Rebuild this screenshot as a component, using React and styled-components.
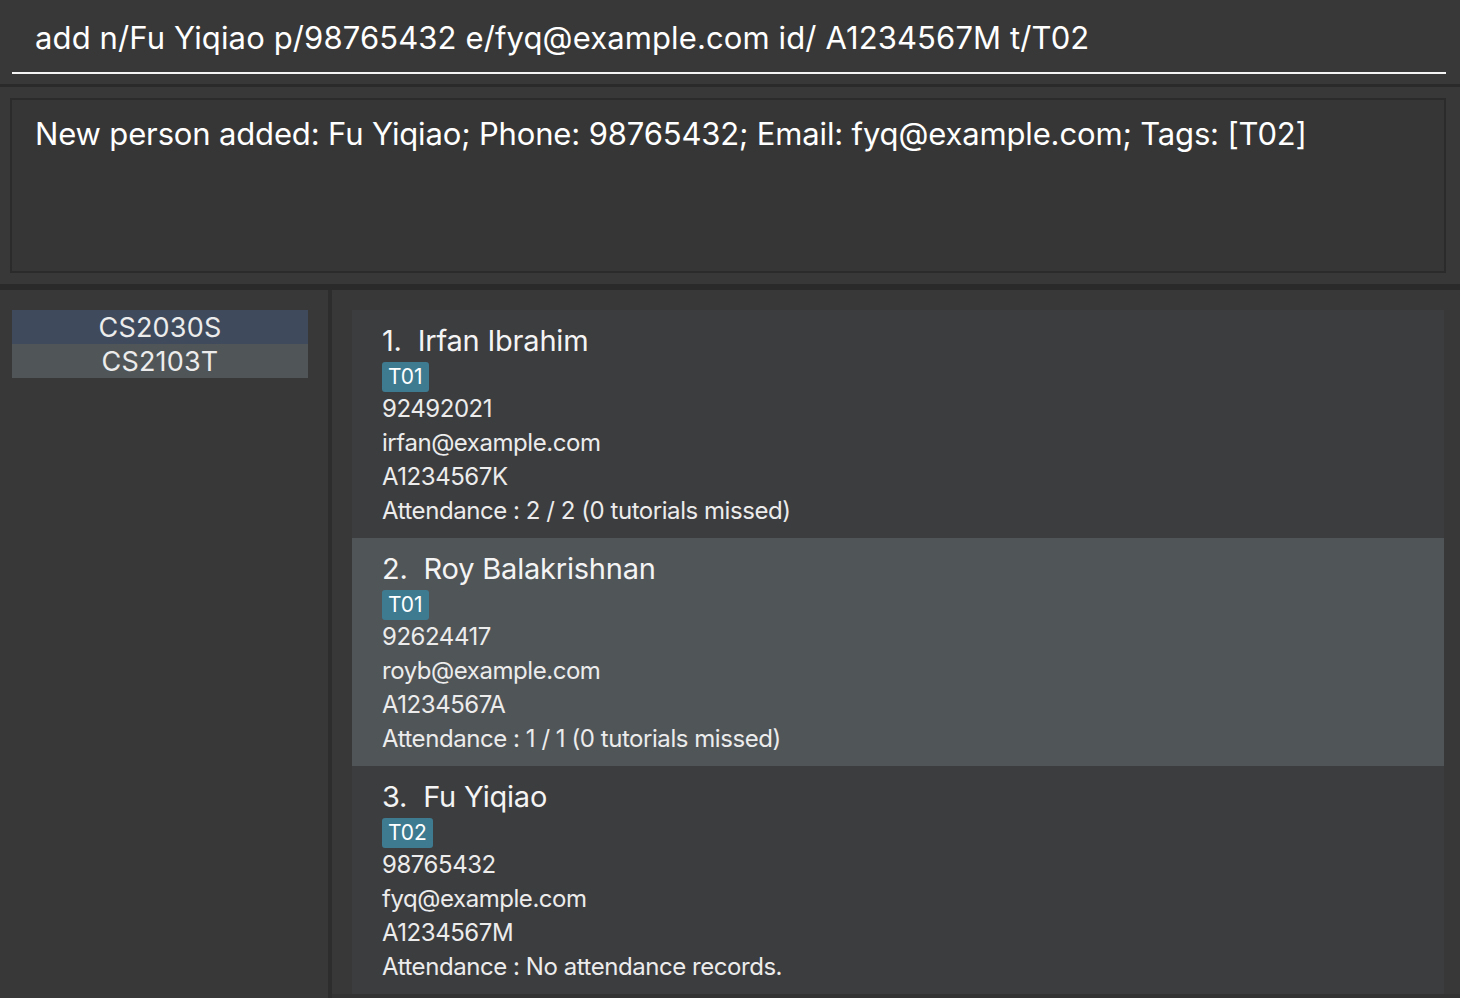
import React from "react";
import styled, { createGlobalStyle } from "styled-components";

const Global = createGlobalStyle`
  html, body { margin: 0; padding: 0; background: #383838; }
  body { font-family: Inter, "Open Sans", sans-serif; }
  #root { height: 998px; }
`;

const Page = styled.div`
  height: 998px;
  display: flex;
  flex-direction: column;
  background: #383838;
  overflow: hidden;
`;

const CommandBar = styled.div`
  height: 84px;
  box-sizing: border-box;
  padding: 0 14px 0 12px;
  display: flex;
  flex-direction: column;
`;

const CommandInput = styled.div`
  height: 74px;
  box-sizing: border-box;
  border-bottom: 2px solid #f4f4f4;
  padding: 14px 0 0 23px;
  font-size: 31px;
  color: #ffffff;
  letter-spacing: 0.12px;
  line-height: 48px;
  white-space: nowrap;
`;

const Separator = styled.div`
  height: ${(p) => p.h}px;
  background: #2a2a2a;
  flex-shrink: 0;
`;

const ResultSection = styled.div`
  height: 197px;
  box-sizing: border-box;
  padding: 11px 14px 11px 10px;
  display: flex;
`;

const ResultBox = styled.div`
  flex: 1;
  border: 2px solid #2b2b2b;
  background: #363636;
  padding: 12px 0 0 23px;
  font-size: 31px;
  letter-spacing: -0.15px;
  color: #ffffff;
  line-height: 44px;
  white-space: nowrap;
`;

const Main = styled.div`
  flex: 1;
  display: flex;
  min-height: 0;
`;

const SidePanel = styled.div`
  width: 328px;
  box-sizing: border-box;
  padding: 20px 20px 0 12px;
  background: #383838;
`;

const Divider = styled.div`
  width: 4px;
  background: #2d2d2d;
`;

const ModuleItem = styled.div`
  height: 34px;
  background: ${(p) => (p.selected ? "#3f4a5c" : "#505658")};
  color: #ececec;
  font-size: 27px;
  line-height: 35px;
  text-align: center;
  letter-spacing: 0.2px;
`;

const ListPanel = styled.div`
  flex: 1;
  box-sizing: border-box;
  padding: 20px 16px 4px 20px;
  display: flex;
  flex-direction: column;
  background: #383838;
  position: relative;
`;

const Card = styled.div`
  height: 228px;
  box-sizing: border-box;
  padding: 11px 0 10px 30px;
  background: ${(p) => (p.selected ? "#505558" : "#3c3d3f")};
  color: #ececec;
  display: flex;
  flex-direction: column;
  align-items: flex-start;
`;

const Name = styled.div`
  font-size: 29px;
  line-height: 40px;
  color: #f4f4f4;
  letter-spacing: -0.2px;
  white-space: pre;
`;

const Tag = styled.div`
  margin-top: 1px;
  height: 30px;
  box-sizing: border-box;
  padding: 0 6px;
  border-radius: 3px;
  background: #3e7b91;
  color: #ffffff;
  font-size: 21px;
  line-height: 30px;
`;

const Line = styled.div`
  font-size: 24px;
  line-height: 34px;
  letter-spacing: -0.45px;
  white-space: nowrap;
`;

const BottomEdge = styled.div`
  position: absolute;
  left: 0;
  right: 0;
  bottom: 0;
  height: 4px;
  background: #333333;
`;

const people = [
  {
    name: "Irfan Ibrahim",
    tag: "T01",
    phone: "92492021",
    email: "irfan@example.com",
    id: "A1234567K",
    att: "Attendance : 2 / 2 (0 tutorials missed)",
  },
  {
    name: "Roy Balakrishnan",
    tag: "T01",
    phone: "92624417",
    email: "royb@example.com",
    id: "A1234567A",
    att: "Attendance : 1 / 1 (0 tutorials missed)",
    selected: true,
  },
  {
    name: "Fu Yiqiao",
    tag: "T02",
    phone: "98765432",
    email: "fyq@example.com",
    id: "A1234567M",
    att: "Attendance : No attendance records.",
  },
];

export default function App() {
  return (
    <Page>
      <Global />
      <CommandBar>
        <CommandInput>add n/Fu Yiqiao p/98765432 e/fyq@example.com id/ A1234567M t/T02</CommandInput>
      </CommandBar>
      <Separator h={3} />
      <ResultSection>
        <ResultBox>
          New person added: Fu Yiqiao; Phone: 98765432; Email: fyq@example.com; Tags: [T02]
        </ResultBox>
      </ResultSection>
      <Separator h={6} />
      <Main>
        <SidePanel>
          <ModuleItem selected>CS2030S</ModuleItem>
          <ModuleItem>CS2103T</ModuleItem>
        </SidePanel>
        <Divider />
        <ListPanel>
          {people.map((p, i) => (
            <Card key={p.name} selected={p.selected}>
              <Name>{`${i + 1}.  ${p.name}`}</Name>
              <Tag>{p.tag}</Tag>
              <Line>{p.phone}</Line>
              <Line>{p.email}</Line>
              <Line>{p.id}</Line>
              <Line>{p.att}</Line>
            </Card>
          ))}
          <BottomEdge />
        </ListPanel>
      </Main>
    </Page>
  );
}
